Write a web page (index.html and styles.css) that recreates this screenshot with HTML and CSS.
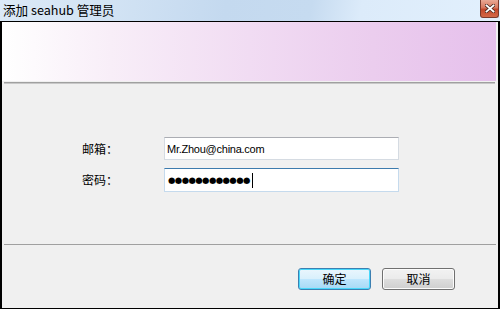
FILE: index.html
```html
<!DOCTYPE html>
<html lang="zh-CN">
<head>
<meta charset="utf-8">
<title>添加 seahub 管理员</title>
<link rel="stylesheet" href="styles.css">
</head>
<body>
<div class="window">
  <div class="titlebar">
    <span class="title">添加 seahub 管理员</span>
    <div class="close" aria-label="关闭">
      <svg width="10" height="9" viewBox="0 0 10 9">
        <path d="M1.5 1.5 L8.5 7.5 M8.5 1.5 L1.5 7.5" stroke="#4a2a22" stroke-width="3.4" stroke-linecap="square"/>
        <path d="M1.5 1.5 L8.5 7.5 M8.5 1.5 L1.5 7.5" stroke="#ffffff" stroke-width="1.8" stroke-linecap="square"/>
      </svg>
    </div>
  </div>
  <div class="frame">
    <div class="banner"></div>
    <div class="sep"></div>
    <div class="form">
      <div class="row">
        <label class="label">邮箱：</label>
        <div class="field">Mr.Zhou@china.com</div>
      </div>
      <div class="row">
        <label class="label">密码：</label>
        <div class="field focused"><span class="dots">●●●●●●●●●●●●</span><span class="caret"></span></div>
      </div>
    </div>
    <div class="sep2"></div>
    <div class="actions">
      <button class="btn primary">确定</button>
      <button class="btn">取消</button>
    </div>
  </div>
</div>
</body>
</html>
```
FILE: styles.css
```css
html, body {
  margin: 0;
  padding: 0;
}
body {
  width: 500px;
  height: 309px;
  overflow: hidden;
  font-family: "Noto Sans CJK SC", "DejaVu Sans", sans-serif;
  font-size: 12px;
  color: #000;
  background: #dbe9f7;
}
.window {
  width: 500px;
  height: 309px;
  display: flex;
  flex-direction: column;
}
.titlebar {
  height: 21px;
  flex: none;
  position: relative;
  display: flex;
  align-items: center;
  background: linear-gradient(100deg, #dbe9f7 0%, #d2e3f4 22%, #c4d9ef 45%, #c6dbf0 62%, #dcebfa 72%, #e2f0fd 100%);
}
.title {
  padding-left: 3px;
  font-size: 12.6px;
  line-height: 21px;
  margin-top: -2px;
  color: #000;
}
.close {
  position: absolute;
  right: 1px;
  top: 0;
  width: 17px;
  height: 17px;
  border: 1px solid #7a3a2c;
  border-top: none;
  border-radius: 0 0 3px 3px;
  background: linear-gradient(#e9a995 0%, #d8775d 45%, #c2472b 55%, #d36848 100%);
  display: flex;
  align-items: center;
  justify-content: center;
}
.frame {
  flex: 1;
  border: 1px solid #000;
  border-left-width: 2px;
  border-right-width: 2px;
  background: #f0f0f0;
  display: flex;
  flex-direction: column;
  padding: 0 2px 0 0;
}
.banner {
  height: 59px;
  flex: none;
  background: linear-gradient(90deg, #ffffff 0%, #f8eef8 22%, #f1dcf3 50%, #ebcdee 75%, #e6c0ec 100%);
}
.sep {
  margin: 1px 1px 0 2px;
  height: 1px;
  border-top: 1px solid #a0a0a0;
  background: #c8c8c8;
  flex: none;
}
.form {
  flex: none;
  padding: 53px 0 0 80px;
  display: flex;
  flex-direction: column;
  gap: 8px;
}
.row {
  display: flex;
  align-items: center;
}
.label {
  width: 82px;
  font-size: 12px;
  line-height: 22px;
}
.field {
  width: 231px;
  height: 21px;
  border: 1px solid #d5dbe2;
  border-top-color: #abadb3;
  background: #fff;
  font-family: "Liberation Sans", Arial, sans-serif;
  font-size: 11px;
  letter-spacing: -0.25px;
  line-height: 20px;
  padding-left: 2px;
  box-sizing: content-box;
  display: flex;
  align-items: center;
  white-space: nowrap;
  color: #000;
}
.field.focused {
  height: 22px;
  border-color: #c5daed;
  border-top-color: #3d7bad;
}
.dots {
  font-family: "DejaVu Sans", sans-serif;
  font-size: 8.5px;
  letter-spacing: -0.6px;
  padding-left: 1px;
}
.caret {
  display: inline-block;
  width: 1px;
  height: 15px;
  background: #000;
  margin-left: 2px;
}
.sep2 {
  margin: 52px 0 0 2px;
  border-top: 1px solid #a0a0a0;
  height: 0;
  flex: none;
}
.actions {
  display: flex;
  justify-content: flex-end;
  gap: 11px;
  padding: 23px 41px 0 0;
}
.btn {
  width: 73px;
  height: 22px;
  padding: 0;
  margin: 0;
  border: 1px solid #707070;
  border-radius: 3px;
  background: linear-gradient(#f2f2f2 0%, #ebebeb 48%, #dddddd 52%, #cfcfcf 100%);
  font-family: "Noto Sans CJK SC", sans-serif;
  font-size: 12px;
  line-height: 18px;
  color: #000;
  box-shadow: inset 0 0 0 1px #fcfcfc;
}
.btn.primary {
  border-color: #3c7fb1;
  background: linear-gradient(#eaf6fd 0%, #d9f0fc 48%, #bee6fd 52%, #a7d9f5 100%);
  box-shadow: inset 0 0 0 1px #48d8fb;
}
```
